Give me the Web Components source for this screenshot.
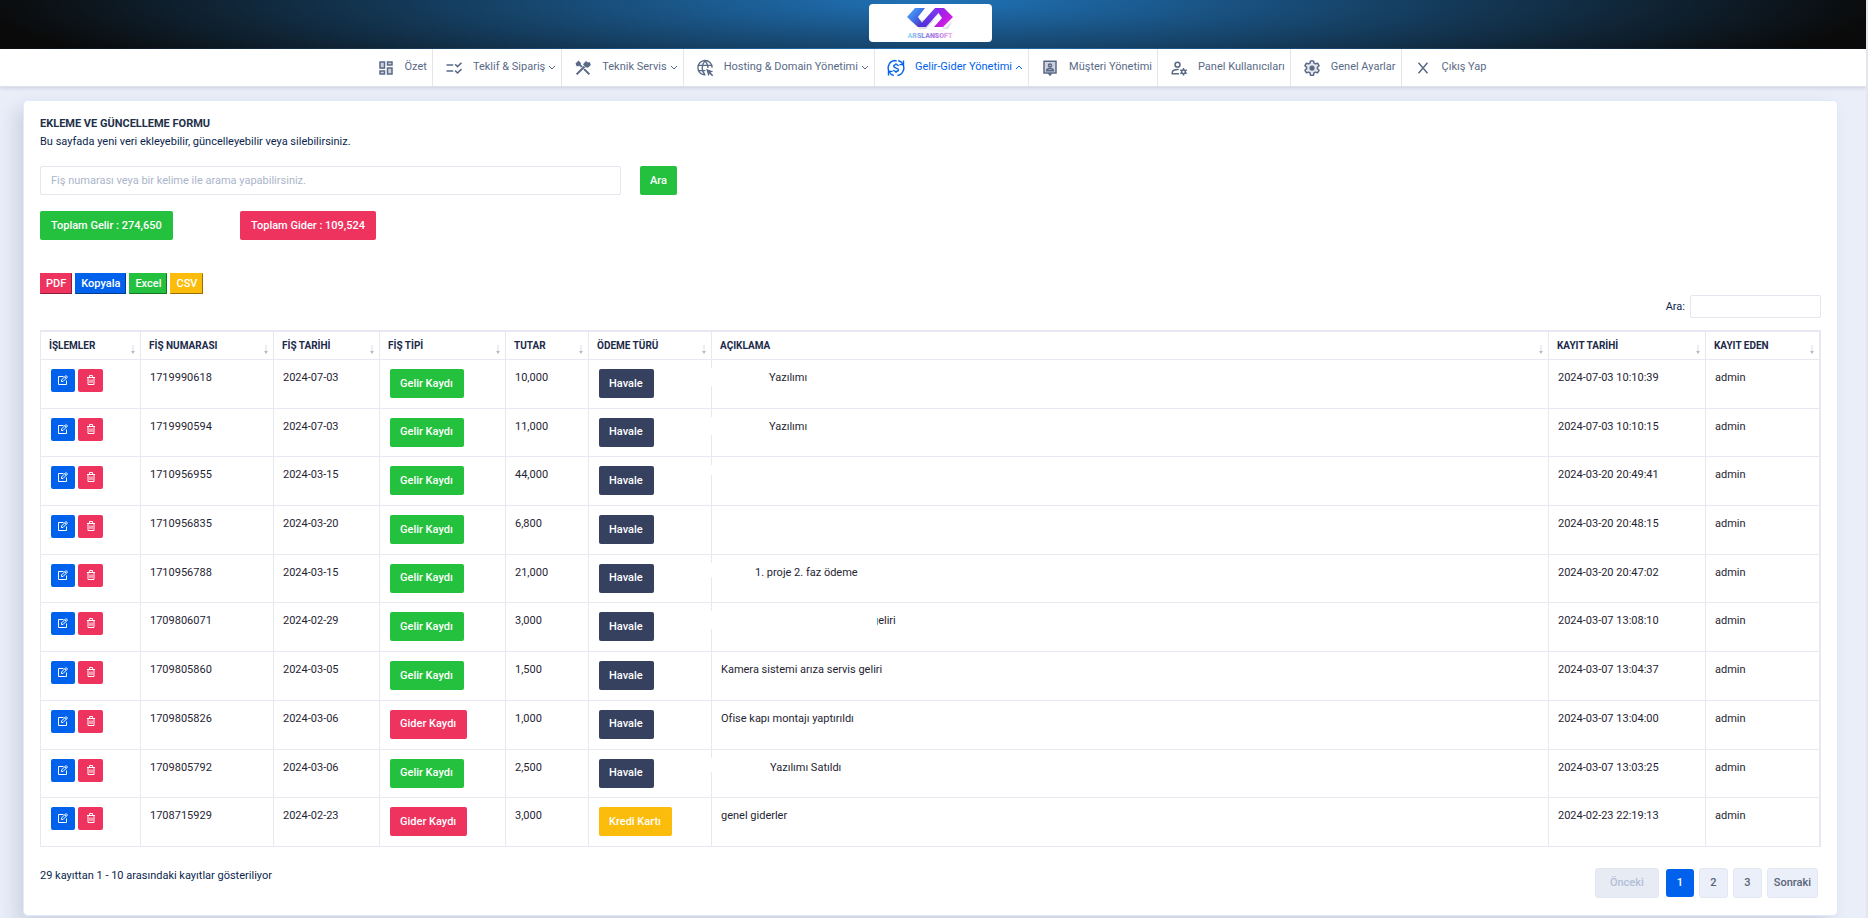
<!DOCTYPE html>
<html lang="tr">
<head>
<meta charset="utf-8">
<title>Gelir-Gider Yönetimi</title>
<style>
  :root {
    --blue: #0062ec;
    --green: #24c13e;
    --red: #ef335f;
    --yellow: #fbbc0b;
    --navy: #36415f;
    --line: #e7e8f1;
    --ink: #0a1f4e;
  }
  html { background: #e3e6ec; }
  body {
    margin: 0 2px 0 0;
    background: #eaeef9;
    color: var(--ink);
    font: 11px/16px Roboto, "Liberation Sans", sans-serif;
  }
</style>
</head>
<body>
<app-header></app-header>
<app-nav>
  <nav-item icon="grid">Özet</nav-item>
  <nav-item icon="rule" menu="down">Teklif &amp; Sipariş</nav-item>
  <nav-item icon="tools" menu="down">Teknik Servis</nav-item>
  <nav-item icon="globe" menu="down">Hosting &amp; Domain Yönetimi</nav-item>
  <nav-item icon="money" menu="up" active>Gelir-Gider Yönetimi</nav-item>
  <nav-item icon="contact">Müşteri Yönetimi</nav-item>
  <nav-item icon="users">Panel Kullanıcıları</nav-item>
  <nav-item icon="gear">Genel Ayarlar</nav-item>
  <nav-item icon="close">Çıkış Yap</nav-item>
</app-nav>
<content-card>
  <span slot="title">EKLEME VE GÜNCELLEME FORMU</span>
  <span slot="subtitle">Bu sayfada yeni veri ekleyebilir, güncelleyebilir veya silebilirsiniz.</span>
  <search-bar></search-bar>
  <total-row></total-row>
  <export-bar></export-bar>
  <table-filter></table-filter>
  <ledger-table></ledger-table>
  <table-footer></table-footer>
</content-card>

<script>
const define = (name, html, setup) => {
  const template = document.createElement('template');
  template.innerHTML = html;
  customElements.define(name, class extends HTMLElement {
    constructor() {
      super();
      this.attachShadow({ mode: 'open' }).append(template.content.cloneNode(true));
    }
    connectedCallback() { if (setup) setup(this, this.shadowRoot); }
  });
};

const icons = {
  grid: '<path fill="#5a6a88" fill-opacity=".3" d="M4 4h6v9H4zM14 12h6v8h-6zM14 4h6v4h-6zM4 16h6v4H4z"/><path fill="none" stroke="currentColor" stroke-width="2" d="M4 4h6v8H4zM14 12h6v8h-6zM14 4h6v4h-6zM4 16h6v4H4z"/>',
  rule: '<path fill="none" stroke="currentColor" stroke-width="2" d="M2 8h9M2 16h9M13.5 7l3.200 3.200L22 5M13.500 15.500l3.200 3.200L22 13.500"/>',
  tools: '<path fill="none" stroke="currentColor" stroke-width="2.800" d="M14 10L3.500 20.500M13.500 13.500l7 7M5 5l5.500 5.500"/><path fill="currentColor" d="M2 6l4-4 3.500 3.500L6 9.500H3.500zM12 7l4-4.500 2.500 2L21 4l1.500 4-4 3.500L15.500 11z"/>',
  globe: '<g fill="none" stroke="currentColor" stroke-width="1.800"><path d="M12.500 21A9.500 9.500 0 1 1 21.500 11.500"/><path d="M12 2.500c-5 5.500-5 13.500 0 18.500M12 2.500c3 3 4 6 4 9.500M3.500 8.500h17M3.500 15.500h9"/></g><path fill="currentColor" d="M13.500 13l9.500 3.500-3.500 1.500 3.500 3.500-1.500 1.500-3.500-3.500L16.500 23z"/>',
  money: '<g fill="none" stroke="currentColor" stroke-width="1.900"><path d="M9 22A10.400 10.400 0 0 1 2 9M15 2a10.400 10.400 0 0 1 7 13"/><path d="M2 9.500C3 5.500 6 2.500 10 2l3 .5M22 14.500c-1 4-4 7-8 7.500"/><path d="M22 2v5.500h-5.500M2 22v-5.500h5.500"/><path d="M15.300 9.500c-.4-1.400-1.600-2-3.300-2s-3 .8-3 2.200c0 3.300 6.300 1.500 6.300 4.700 0 1.500-1.400 2.200-3.300 2.200s-3-.6-3.500-2.100M12 5.500v2M12 16.500v2"/></g>',
  contact: '<path fill="currentColor" fill-opacity=".3" d="M4 3h16v15H4z"/><g fill="none" stroke="currentColor" stroke-width="2"><path d="M4 3h16v15.500H4z"/><circle cx="12" cy="8.500" r="2"/><path d="M7.500 15.500c0-4 9-4 9 0z"/></g><path fill="currentColor" d="M8.500 18.500h7L12 23z"/>',
  users: '<g fill="none" stroke="currentColor" stroke-width="2"><circle cx="10" cy="7.500" r="3.300"/><path d="M11.500 14c-4-.5-8.500 1-8.500 4v1.500h9"/><circle cx="18" cy="17" r="2.500"/><path d="M18 12v2.500M18 19.500V22M13.700 14.500l2.200 1.200M20.100 18.300l2.200 1.200M13.700 19.500l2.200-1.200M20.100 15.700l2.200-1.200"/></g>',
  gear: '<path fill="currentColor" fill-opacity=".15" d="M12 4l8 4v8l-8 4-8-4V8z"/><path fill="none" stroke="currentColor" stroke-width="2" stroke-linejoin="round" d="M10 2.500h4l.6 2.900 2 1.100 2.800-.9 2 3.400-2.200 2v2l2.200 2-2 3.400-2.800-.9-2 1.100-.6 2.900h-4l-.6-2.900-2-1.100-2.800.9-2-3.400 2.200-2v-2l-2.200-2 2-3.400 2.800.9 2-1.100z"/><circle cx="12" cy="12" r="3.500" fill="currentColor"/>',
  close: '<path fill="none" stroke="currentColor" stroke-width="2" d="M6 5l12 14M18 5L6 19"/>'
};

define('app-header', `
  <style>
    :host {
      display: flex; justify-content: center; align-items: center;
      height: 48px;
      border-bottom: 1px solid transparent;
      background: radial-gradient(ellipse 51% 230% at 50% 0, #2073b8, #0a0a0a);
    }
    a {
      display: flex; justify-content: center; box-sizing: border-box;
      width: 123px; height: 38px; margin: 0 6px 2px 0;
      background: #fff; border-radius: 4px;
    }
  </style>
  <a href="#" aria-label="Arslansoft">
    <svg width="48" height="38" viewBox="0 0 48 38">
      <defs>
        <linearGradient id="l" x1="0" y1="0" x2="1" y2="1"><stop offset="0" stop-color="#4fb4f8"/><stop offset=".5" stop-color="#3f6fe8"/><stop offset="1" stop-color="#5a1fb8"/></linearGradient>
        <linearGradient id="m" x1="0" y1="1" x2="1" y2="0"><stop offset="0" stop-color="#4a2fd8"/><stop offset="1" stop-color="#8a3cf5"/></linearGradient>
        <linearGradient id="r" x1="0" y1="0" x2="1" y2="1"><stop offset="0" stop-color="#7a2cf0"/><stop offset=".6" stop-color="#c01ce0"/><stop offset="1" stop-color="#f52cf5"/></linearGradient>
        <linearGradient id="t" x1="0" y1="0" x2="1" y2="0"><stop offset="0" stop-color="#7fdcee"/><stop offset=".35" stop-color="#6a78e0"/><stop offset=".65" stop-color="#9a4ce0"/><stop offset="1" stop-color="#f4a4f0"/></linearGradient>
      </defs>
      <path fill="#c9c6da" opacity=".6" d="M3 16l11 9h6l9-10 9 10h4l5-9-8 8-9-8z"/>
      <path fill="url(#l)" d="M9 4h10l-7 9 7 10h-7L1 13z"/>
      <path fill="url(#m)" d="M12 23l17-19h8L20 23z"/>
      <path fill="url(#r)" d="M29 4h9l9 9-10 10h-9l8-9z"/>
      <text x="24" y="34" text-anchor="middle" font-family="Roboto" font-weight="900" font-size="7" fill="url(#t)" opacity=".8">ARSLANSOFT</text>
    </svg>
  </a>`);

define('app-nav', `
  <style>
    :host { display: block; position: relative; background: #fff; border-bottom: 1px solid #dfdfeb; box-shadow: 0 1px 4px rgba(60, 60, 110, .18); }
    nav { display: flex; justify-content: center; height: 37px; padding-right: 10px; }
  </style>
  <nav><slot></slot></nav>`);

define('nav-item', `
  <style>
    :host { display: flex; border-right: 1px solid #e4e5ec; color: #596a87; }
    :host(:last-child) { border-right: 0; }
    :host([active]) { color: var(--blue); }
    a { display: flex; align-items: center; padding: 0 5px 0 12px; color: inherit; text-decoration: none; white-space: nowrap; }
    .icon { width: 18px; height: 18px; margin-right: 10px; }
    .label { padding-bottom: 1px; }
    .arrow { width: 8px; height: 8px; margin-left: 3px; }
  </style>
  <a href="#"><svg class="icon" viewBox="0 0 24 24"></svg><span class="label"><slot></slot></span></a>`,
  (el, root) => {
    root.querySelector('.icon').innerHTML = icons[el.getAttribute('icon')];
    const menu = el.getAttribute('menu');
    if (menu) {
      const d = menu === 'up' ? 'M1 5l3-3 3 3' : 'M1 2l3 3 3-3';
      root.querySelector('a').insertAdjacentHTML('beforeend',
        `<svg class="arrow" viewBox="0 0 8 8"><path fill="none" stroke="currentColor" d="${d}"/></svg>`);
    }
  });

define('content-card', `
  <style>
    :host {
      display: block; margin: 13px 28px 2px 23px; padding: 15px 16px 17px;
      background: #fff; border: 1px solid #dfebfd; border-radius: 5px;
      box-shadow: -8px 8px 18px rgba(25, 42, 70, .13);
    }
    h1 { margin: 0 0 2px; font-size: 11px; line-height: 16px; font-weight: 700; color: #223047; }
    p { margin: 0; }
  </style>
  <h1><slot name="title"></slot></h1>
  <p><slot name="subtitle"></slot></p>
  <slot></slot>`);

define('search-bar', `
  <style>
    :host { display: block; margin-top: 16px; }
    form { display: flex; gap: 19px; }
    input {
      flex: 0 1 581px; box-sizing: border-box; height: 29px; padding: 0 10px;
      border: 1px solid #e3e5ef; border-radius: 2px; font: inherit; color: var(--ink);
    }
    input::placeholder { color: #abb5ca; opacity: 1; }
    button { height: 29px; padding: 0 10px; border: 0; border-radius: 2px; background: var(--green); color: #fff; font: inherit; font-weight: 500; }
  </style>
  <form onsubmit="return false"><input type="text" aria-label="Arama" placeholder="Fiş numarası veya bir kelime ile arama yapabilirsiniz."><button>Ara</button></form>`);

define('total-row', `
  <style>
    :host { display: grid; grid-template-columns: 200px auto; justify-content: start; justify-items: start; margin-top: 16px; }
    button { height: 29px; padding: 0 11px; border: 0; border-radius: 2px; background: var(--green); color: #fff; font: inherit; font-weight: 500; }
    .out { background: var(--red); }
  </style>
  <button>Toplam Gelir : 274,650</button><button class="out">Toplam Gider : 109,524</button>`);

define('export-bar', `
  <style>
    :host { display: flex; gap: 3px; margin-top: 33px; }
    button { height: 21px; padding: 0 5px; border: 1px solid; border-color: var(--c) rgba(0,0,0,.4) rgba(0,0,0,.4) var(--c); background: var(--c); color: #fff; font: inherit; font-weight: 500; }
  </style>
  <button style="--c:var(--red)">PDF</button><button style="--c:var(--blue)">Kopyala</button><button style="--c:var(--green)">Excel</button><button style="--c:var(--yellow)">CSV</button>`);

define('table-filter', `
  <style>
    :host { display: flex; justify-content: flex-end; margin: 1px 0 12px; }
    label { display: flex; align-items: center; gap: 5px; }
    input { box-sizing: border-box; width: 131px; height: 23px; border: 1px solid #e3e5ef; border-radius: 2px; font: inherit; }
  </style>
  <label>Ara:<input type="search"></label>`);

define('status-badge', `
  <style>
    :host { display: inline-flex; align-items: center; height: 29px; padding: 0 11px 0 10px; border-radius: 2px; background: var(--green); color: #fff; font-weight: 500; vertical-align: top; }
    :host([kind="out"]) { background: var(--red); }
    :host([kind="transfer"]) { background: var(--navy); }
    :host([kind="card"]) { background: var(--yellow); }
  </style>
  <slot></slot>`);

define('row-actions', `
  <style>
    :host { display: flex; gap: 3px; }
    button { display: flex; align-items: center; justify-content: center; width: 24px; height: 23px; padding: 0; border: 0; border-radius: 2px; background: var(--blue); color: #fff; }
    .del { width: 25px; background: var(--red); }
    svg { width: 10px; height: 12px; margin-bottom: 1px; fill: none; stroke: currentColor; }
  </style>
  <button aria-label="Düzenle"><svg viewBox="0 0 10 12"><path d="M5.500 2.500h-5v8h8V6.500M3.500 7.500V6L8 1.500 9.500 3 5 7.500zM6.700 2.800l1.500 1.500"/></svg></button>
  <button class="del" aria-label="Sil"><svg viewBox="0 0 10 12"><path d="M1 3.500h8M3.500 3.500v-2h3v2M2 3.500v7h6v-7M4 5.500v3.500M6 5.500v3.500"/></svg></button>`);

const rows = [
  ['1719990618', '2024-07-03', 'in', '10,000', 'transfer', 'Yazılımı', '2024-07-03 10:10:39', [40, 48, 18]],
  ['1719990594', '2024-07-03', 'in', '11,000', 'transfer', 'Yazılımı', '2024-07-03 10:10:15', [40, 48, 18]],
  ['1710956955', '2024-03-15', 'in', '44,000', 'transfer', '', '2024-03-20 20:49:41', [40, 48, 10]],
  ['1710956835', '2024-03-20', 'in', '6,800', 'transfer', '', '2024-03-20 20:48:15'],
  ['1710956788', '2024-03-15', 'in', '21,000', 'transfer', '1. proje 2. faz ödeme', '2024-03-20 20:47:02', [40, 34, 14]],
  ['1709806071', '2024-02-29', 'in', '3,000', 'transfer', 'geliri', '2024-03-07 13:08:10', [166, 151, 18]],
  ['1709805860', '2024-03-05', 'in', '1,500', 'transfer', 'Kamera sistemi arıza servis geliri', '2024-03-07 13:04:37'],
  ['1709805826', '2024-03-06', 'out', '1,000', 'transfer', 'Ofise kapı montajı yaptırıldı', '2024-03-07 13:04:00'],
  ['1709805792', '2024-03-06', 'in', '2,500', 'transfer', 'Yazılımı Satıldı', '2024-03-07 13:03:25', [40, 49, 14]],
  ['1708715929', '2024-02-23', 'out', '3,000', 'card', 'genel giderler', '2024-02-23 22:19:13']
];
const kindText = { in: 'Gelir Kaydı', out: 'Gider Kaydı', transfer: 'Havale', card: 'Kredi Kartı' };
const heads = ['İŞLEMLER', 'FİŞ NUMARASI', 'FİŞ TARİHİ', 'FİŞ TİPİ', 'TUTAR', 'ÖDEME TÜRÜ', 'AÇIKLAMA', 'KAYIT TARİHİ', 'KAYIT EDEN'];
const widths = [100, 133, 106, 126, 83, 123, 0, 157, 114];

define('ledger-table', `
  <style>
    :host { display: block; }
    table { width: 100%; height: 517px; box-sizing: border-box; table-layout: fixed; border: 1px solid var(--line); border-spacing: 0; color: #1f2533; }
    th, td { box-sizing: border-box; border: solid var(--line); border-width: 1px 1px 0 0; text-align: left; vertical-align: top; }
    th { height: 28px; padding: 6px 8px 5px; font-size: 10px; line-height: 16px; font-weight: 700; color: #1c2a4a; position: relative; }
    th svg { position: absolute; right: 5px; bottom: 5px; width: 4px; height: 9px; }
    td { position: relative; height: 48px; padding: 10px 9px; }
    .control { padding: 9px 10px; }
    .mask { position: absolute; left: -1px; top: 8px; background: #fff; }
    .note { display: inline-block; }
  </style>
  <table><colgroup></colgroup><thead><tr></tr></thead><tbody></tbody></table>`,
  (el, root) => {
    root.querySelector('colgroup').innerHTML = widths.map(w => w ? `<col style="width:${w}px">` : '<col>').join('');
    root.querySelector('thead tr').innerHTML = heads.map(h =>
      `<th scope="col">${h}<svg viewBox="0 0 4 9"><path fill="none" stroke="#dcdde2" d="M2 0v8"/><path fill="#b9bbc2" d="M0 6h4L2 9z"/></svg></th>`).join('');
    root.querySelector('tbody').innerHTML = rows.map(([no, date, kind, sum, pay, note, saved, mask]) => `<tr>
      <td class="control"><row-actions></row-actions></td><td>${no}</td><td>${date}</td>
      <td class="control"><status-badge kind="${kind}">${kindText[kind]}</status-badge></td><td>${sum}</td>
      <td class="control"><status-badge kind="${pay}">${kindText[pay]}</status-badge></td>
      <td><span class="note" style="padding-left:${mask ? mask[1] : 0}px">${note}</span>${mask ? `<span class="mask" style="width:${mask[0]}px;height:${mask[2]}px"></span>` : ''}</td>
      <td>${saved}</td><td>admin</td></tr>`).join('');
  });

define('table-footer', `
  <style>
    :host { display: flex; justify-content: space-between; align-items: flex-start; padding: 21px 3px 0 0; }
    nav { display: flex; align-items: center; gap: 5px; }
    button { box-sizing: border-box; min-width: 29px; height: 30px; padding: 0 6px; border: 1px solid #e3e7f2; border-radius: 3px; background: #ebeff9; color: #5a6478; font: inherit; font-weight: 500; }
    .prev { padding: 0 14px; margin-right: 2px; background: #e6ebf4; color: #b3bfd6; }
    .on { min-width: 28px; height: 28px; border: 0; background: var(--blue); color: #fff; }
  </style>
  <span>29 kayıttan 1 - 10 arasındaki kayıtlar gösteriliyor</span>
  <nav><button class="prev" disabled>Önceki</button><button class="on">1</button><button>2</button><button>3</button><button>Sonraki</button></nav>`);
</script>
</body>
</html>
